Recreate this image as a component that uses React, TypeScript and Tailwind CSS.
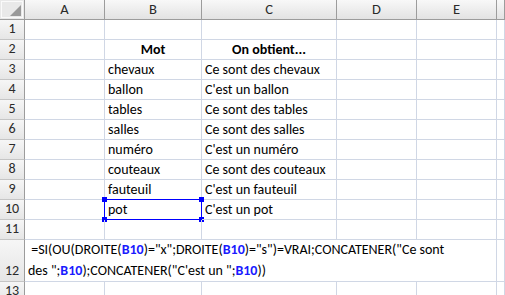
import React from "react";

const cols = ["A", "B", "C", "D", "E", ""];
const colW = ["w-[80px]", "w-[97px]", "w-[135px]", "w-[80px]", "w-[80px]", "flex-1"];

type Row = { n: number; b?: string; c?: string; bold?: boolean; sel?: boolean };

const rows: Row[] = [
  { n: 1 },
  { n: 2, b: "Mot", c: "On obtient...", bold: true },
  { n: 3, b: "chevaux", c: "Ce sont des chevaux" },
  { n: 4, b: "ballon", c: "C'est un ballon" },
  { n: 5, b: "tables", c: "Ce sont des tables" },
  { n: 6, b: "salles", c: "Ce sont des salles" },
  { n: 7, b: "numéro", c: "C'est un numéro" },
  { n: 8, b: "couteaux", c: "Ce sont des couteaux" },
  { n: 9, b: "fauteuil", c: "C'est un fauteuil" },
  { n: 10, b: "pot", c: "C'est un pot", sel: true },
  { n: 11 },
];

const font = { fontFamily: "Carlito, Lato, 'Open Sans', sans-serif" };

function RowHead({ n, tall }: { n: number | string; tall?: boolean }) {
  return (
    <div
      className={`w-[25px] shrink-0 border-r border-b border-r-[#9c9c9c] border-b-[#c5c5c5] bg-gradient-to-b from-[#f6f6f6] to-[#e6e6e6] flex justify-center items-end text-[#2a2a2a] text-[14px] leading-none pb-[3px] ${
        tall ? "h-[42px]" : "h-[20px]"
      }`}
    >
      {n}
    </div>
  );
}

function Ref() {
  return <span className="text-[#1a1aff] font-bold">B10</span>;
}

export default function App() {
  return (
    <div className="w-[505px] h-[295px] overflow-hidden bg-white text-[14px] text-black" style={font}>
      {/* column header strip */}
      <div className="flex h-[20px]">
        <div className="w-[25px] shrink-0 border-r border-b border-[#9c9c9c] bg-[#e9e9e9] relative">
          <div className="absolute inset-[1px] border border-[#fafafa]" />
          <svg className="absolute right-[3px] bottom-[3px]" width="11" height="11" viewBox="0 0 11 11">
            <polygon points="11,0 11,11 0,11" fill="#9a9a9a" />
          </svg>
        </div>
        {cols.map((c, i) => (
          <div
            key={i}
            className={`${colW[i]} ${i < 5 ? "shrink-0" : ""} border-r border-b border-[#9c9c9c] bg-gradient-to-b from-[#f8f8f8] to-[#e3e3e3] flex items-center justify-center text-[#2a2a2a] text-[14.5px] leading-none`}
          >
            {c}
          </div>
        ))}
      </div>

      {rows.map((r) => (
        <div key={r.n} className="flex h-[20px]">
          <RowHead n={r.n} />
          {cols.map((_, i) => {
            const text = i === 1 ? r.b : i === 2 ? r.c : undefined;
            return (
              <div
                key={i}
                className={`${colW[i]} ${i < 5 ? "shrink-0" : ""} border-r border-b border-[#d0d7e5] flex items-end pb-[1px] leading-[17px] whitespace-nowrap relative ${
                  r.bold ? "justify-center font-bold" : "pl-[3px]"
                }`}
              >
                {text}
                {r.sel && i === 1 && (
                  <>
                    <div className="absolute left-[-1px] top-[-1px] right-[-1px] bottom-[-1px] border border-[#0000ff]" />
                    <div className="absolute left-[-3px] top-[-3px] w-[5px] h-[5px] bg-[#0000ff]" />
                    <div className="absolute right-[-3px] top-[-3px] w-[5px] h-[5px] bg-[#0000ff]" />
                    <div className="absolute left-[-3px] bottom-[-3px] w-[5px] h-[5px] bg-[#0000ff]" />
                    <div className="absolute right-[-3px] bottom-[-3px] w-[5px] h-[5px] bg-[#0000ff]" />
                  </>
                )}
              </div>
            );
          })}
        </div>
      ))}

      {/* row 12: merged cell A12:E12 holding the formula text */}
      <div className="flex h-[42px]">
        <RowHead n={12} tall />
        <div className="w-[472px] shrink-0 border-r border-b border-[#d0d7e5] px-[3px] pb-0 flex items-end leading-[21px] whitespace-pre">
          <div>
            {" =SI(OU(DROITE("}
            <Ref />
            {')="x";DROITE('}
            <Ref />
            {')="s")=VRAI;CONCATENER("Ce sont'}
            <br />
            {'des ";'}
            <Ref />
            {');CONCATENER("C\'est un ";'}
            <Ref />
            {"))"}
          </div>
        </div>
        <div className="flex-1 border-r border-b border-[#d0d7e5]" />
      </div>

      <div className="flex h-[20px]">
        <RowHead n={13} />
        {cols.map((_, i) => (
          <div key={i} className={`${colW[i]} ${i < 5 ? "shrink-0" : ""} border-r border-b border-[#d0d7e5]`} />
        ))}
      </div>
    </div>
  );
}
